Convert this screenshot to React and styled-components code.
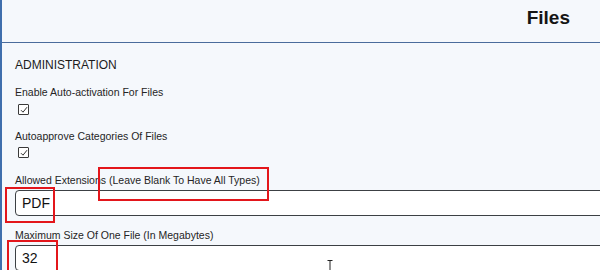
import React from "react";
import styled, { createGlobalStyle } from "styled-components";

const GlobalStyle = createGlobalStyle`
  body {
    margin: 0;
    background: #f5f8fc;
    overflow: hidden;
    font-family: "Liberation Sans", Arial, sans-serif;
    color: #222;
  }
`;

function App() {
  return (
    <Page>
      <GlobalStyle />
      <Header>
        <Title>Files</Title>
      </Header>
      <Body>
        <SectionTitle>ADMINISTRATION</SectionTitle>
        <Field $top={14}>
          <Label>Enable Auto-activation For Files</Label>
          <Check $top={5} />
        </Field>
        <Field $top={15}>
          <Label>Autoapprove Categories Of Files</Label>
          <Check $top={4} />
        </Field>
        <Field $top={16}>
          <Label>Allowed Extensions (Leave Blank To Have All Types)</Label>
          <Input defaultValue="PDF" />
        </Field>
        <Field $top={13}>
          <Label>Maximum Size Of One File (In Megabytes)</Label>
          <Input defaultValue="32" />
        </Field>
      </Body>

      {/* annotation boxes drawn on top of the form */}
      <Mark $x={5} $y={187} $w={50} $h={36} />
      <Mark $x={98} $y={167} $w={171} $h={34} />
      <Mark $x={7} $y={240} $w={51} $h={40} />
      <Cursor width="6" height="11" viewBox="0 0 6 11">
        <path d="M0.5 0.5h5M3 0.5v10M0.5 10.5h5" stroke="#222" strokeWidth="1" fill="none" />
      </Cursor>
    </Page>
  );
}

function Check({ $top }) {
  return (
    <CheckBox $top={$top}>
      <svg width="8" height="8" viewBox="0 0 8 8">
        <path d="M1 4.2l2 2L7 1.2" stroke="#333" strokeWidth="1" fill="none" />
      </svg>
    </CheckBox>
  );
}

export default App;

const Page = styled.div`
  position: relative;
  height: 270px;
  overflow: hidden;
  border-left: 2px solid #3f6fad;
`;

const Header = styled.div`
  display: flex;
  justify-content: flex-end;
  align-items: flex-start;
  height: 43px;
  box-sizing: border-box;
  padding: 7px 30px 0 0;
  border-bottom: 1px solid #4a6c9c;
`;

const Title = styled.h1`
  margin: 0;
  font-size: 19px;
  line-height: 22px;
  font-weight: bold;
  color: #151515;
`;

const Body = styled.div`
  display: flex;
  flex-direction: column;
  padding: 15px 0 0 13px;
`;

const SectionTitle = styled.div`
  font-size: 12px;
  line-height: 14px;
  color: #1c1c1c;
`;

const Field = styled.div`
  display: flex;
  flex-direction: column;
  align-items: flex-start;
  margin-top: ${(p) => p.$top}px;
`;

const Label = styled.label`
  font-size: 10.5px;
  line-height: 13px;
  color: #252525;
`;

const CheckBox = styled.span`
  display: flex;
  align-items: center;
  justify-content: center;
  width: 11px;
  height: 11px;
  box-sizing: border-box;
  margin: ${(p) => p.$top}px 0 0 3px;
  border: 1px solid #3a3a3a;
  border-radius: 1px;
  background: #fff;
`;

const Input = styled.input`
  width: 640px;
  height: 26px;
  box-sizing: border-box;
  margin-top: 3px;
  padding: 0 6px;
  border: 1px solid #3c4044;
  border-radius: 4px;
  background: #fff;
  font-family: "Liberation Sans", Arial, sans-serif;
  font-size: 14px;
  color: #111;
  outline: none;
`;

const Mark = styled.div`
  position: absolute;
  left: ${(p) => p.$x - 2}px;
  top: ${(p) => p.$y}px;
  width: ${(p) => p.$w}px;
  height: ${(p) => p.$h}px;
  box-sizing: border-box;
  border: 2px solid #e3161b;
  pointer-events: none;
`;

const Cursor = styled.svg`
  position: absolute;
  left: 325px;
  top: 260px;
`;
